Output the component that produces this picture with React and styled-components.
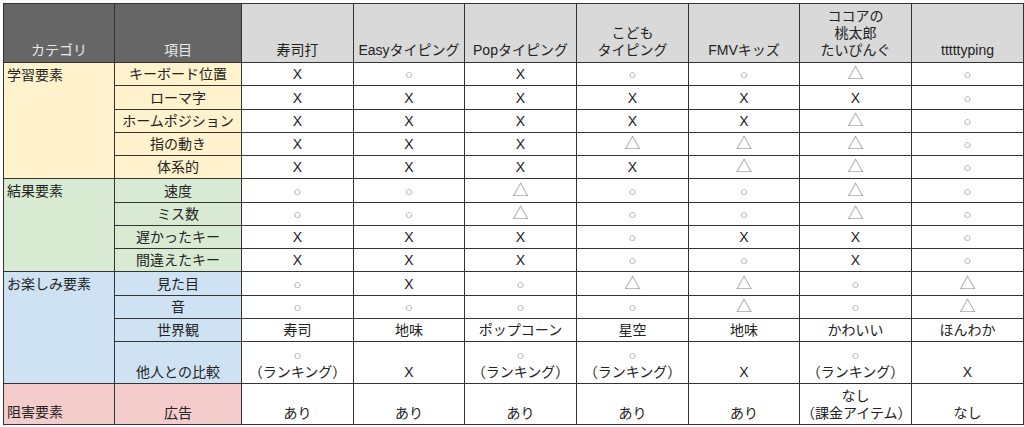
import React from 'react'
import styled, { createGlobalStyle } from 'styled-components'

const GlobalStyle = createGlobalStyle`
  body {
    margin: 0;
    background: #fff;
    font-family: "Liberation Sans", "Noto Sans CJK JP", sans-serif;
  }
`

const apps = ['寿司打', 'Easyタイピング', 'Popタイピング', 'こども\nタイピング', 'FMVキッズ', 'ココアの\n桃太郎\nたいぴんぐ', 'tttttyping']
const widths = [111, 127, 112, 111, 112, 112, 111, 112, 112]

const R = '○\n（ランキング）'

const groups = [
  {
    name: '学習要素',
    tone: 'yellow',
    rows: [
      ['キーボード位置', ['X', '○', 'X', '○', '○', '△', '○']],
      ['ローマ字', ['X', 'X', 'X', 'X', 'X', 'X', '○']],
      ['ホームポジション', ['X', 'X', 'X', 'X', 'X', '△', '○']],
      ['指の動き', ['X', 'X', 'X', '△', '△', '△', '○']],
      ['体系的', ['X', 'X', 'X', 'X', '△', '△', '○']],
    ],
  },
  {
    name: '結果要素',
    tone: 'green',
    rows: [
      ['速度', ['○', '○', '△', '○', '○', '△', '○']],
      ['ミス数', ['○', '○', '△', '○', '○', '△', '○']],
      ['遅かったキー', ['X', 'X', 'X', '○', 'X', 'X', '○']],
      ['間違えたキー', ['X', 'X', 'X', '○', '○', 'X', '○']],
    ],
  },
  {
    name: 'お楽しみ要素',
    tone: 'blue',
    rows: [
      ['見た目', ['○', 'X', '○', '△', '△', '○', '△']],
      ['音', ['○', '○', '○', '○', '△', '○', '△']],
      ['世界観', ['寿司', '地味', 'ポップコーン', '星空', '地味', 'かわいい', 'ほんわか']],
      ['他人との比較', [R, 'X', R, R, 'X', R, 'X'], 42],
    ],
  },
  {
    name: '阻害要素',
    tone: 'pink',
    bottom: true,
    rows: [
      ['広告', ['あり', 'あり', 'あり', 'あり', 'あり', 'なし\n（課金アイテム）', 'なし'], 41],
    ],
  },
]

const tones = {
  yellow: '#fff2cc',
  green: '#d9ead3',
  blue: '#cfe2f3',
  pink: '#f4cccc',
}

const Page = styled.div`
  padding: 3px;
`

const Table = styled.table`
  border-collapse: collapse;
  table-layout: fixed;
  width: 1020px;
  font-size: 14px;
  color: #222;
`

const Row = styled.tr`
  height: ${p => p.$h}px;
`

const HeadCell = styled.th`
  border: 1px solid #333;
  background: ${p => (p.$dark ? '#666666' : '#d9d9d9')};
  color: ${p => (p.$dark ? '#e8e8e8' : '#222')};
  font-weight: normal;
  font-size: 14px;
  text-align: center;
  vertical-align: bottom;
  white-space: pre-line;
  line-height: 17px;
  padding: 0 0 3px;
  overflow: hidden;
`

const GroupCell = styled.td`
  border: 1px solid #333;
  background: ${p => tones[p.$tone]};
  vertical-align: ${p => (p.$bottom ? 'bottom' : 'top')};
  text-align: left;
  padding: ${p => (p.$bottom ? '0 3px 3px' : '4px 3px 0')};
  line-height: 17px;
`

const ItemCell = styled.td`
  border: 1px solid #333;
  background: ${p => tones[p.$tone]};
  text-align: center;
  vertical-align: bottom;
  padding: 0 1px 2px;
  line-height: 17px;
  white-space: nowrap;
`

const ValueCell = styled.td`
  border: 1px solid #333;
  background: #fff;
  text-align: center;
  vertical-align: bottom;
  white-space: pre-line;
  padding: 0 1px 2px;
  line-height: 17px;
`

const Circle = styled.span`
  font-size: 13px;
  color: #777;
`

const Triangle = styled.span`
  font-size: 16px;
  line-height: 17px;
  color: #888;
`

function Value({ text }) {
  if (text === '○') return <Circle>○</Circle>
  if (text === '△') return <Triangle>△</Triangle>
  if (text.startsWith('○\n')) {
    return (
      <>
        <Circle>○</Circle>
        {'\n' + text.slice(2)}
      </>
    )
  }
  return text
}

export default function App() {
  return (
    <Page>
      <GlobalStyle />
      <Table>
        <colgroup>
          {widths.map((w, i) => (
            <col key={i} style={{ width: w }} />
          ))}
        </colgroup>
        <thead>
          <Row $h={59}>
            <HeadCell $dark>カテゴリ</HeadCell>
            <HeadCell $dark>項目</HeadCell>
            {apps.map(a => (
              <HeadCell key={a}>{a}</HeadCell>
            ))}
          </Row>
        </thead>
        <tbody>
          {groups.map(g =>
            g.rows.map(([item, values, h], i) => (
              <Row key={item} $h={h || 23.25}>
                {i === 0 && (
                  <GroupCell rowSpan={g.rows.length} $tone={g.tone} $bottom={g.bottom}>
                    {g.name}
                  </GroupCell>
                )}
                <ItemCell $tone={g.tone}>{item}</ItemCell>
                {values.map((v, j) => (
                  <ValueCell key={j}>
                    <Value text={v} />
                  </ValueCell>
                ))}
              </Row>
            ))
          )}
        </tbody>
      </Table>
    </Page>
  )
}
